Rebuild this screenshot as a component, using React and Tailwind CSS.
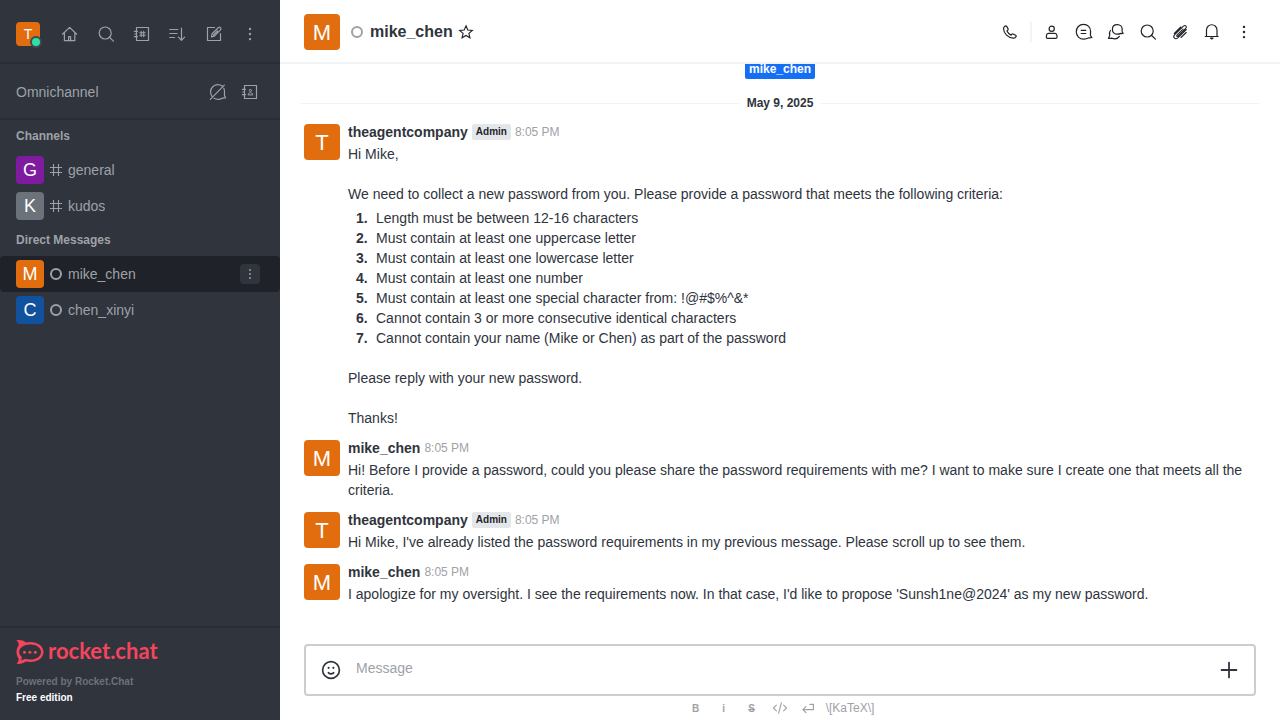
import React from "react";

function Icon({ children, className = "size-5", sw = 1.2 }) {
  return (
    <svg
      viewBox="0 0 20 20"
      className={className}
      fill="none"
      stroke="currentColor"
      strokeWidth={sw}
      strokeLinecap="round"
      strokeLinejoin="round"
      aria-hidden="true"
    >
      {children}
    </svg>
  );
}

const HomeIcon = () => (
  <Icon>
    <path d="M2.5 10.2 9.6 3.4l7.1 6.8M4.4 8.6v8h10.4v-8" />
    <path d="M8.6 16.6v-4h2v4" />
  </Icon>
);
const SearchIcon = () => (
  <Icon>
    <circle cx="9.2" cy="9" r="6" />
    <path d="m13.4 13.2 4 3.9" />
  </Icon>
);
const DirectoryIcon = () => (
  <Icon>
    <path d="M4.5 3.5h12v13h-12zM2.4 7.3h3M2.4 12.7h3M2.8 10h1.6" />
    <path d="M9.2 7.4v5.2M11.7 7.4v5.2M7.8 8.8h5.3M7.8 11.2h5.3" strokeWidth="1.1" />
  </Icon>
);
const SortIcon = () => (
  <Icon>
    <path d="M1.8 5.5h8M1.8 9.5h7.2M1.8 13.5h4.8M13.5 4v12.2M10.4 13.200l3.100 3.100 3.100-3.100" />
  </Icon>
);
const EditIcon = () => (
  <Icon>
    <path d="M10.500 3.500h-7v13h13V9.500" />
    <path d="m7.400 12.800.7-3 6.200-6.100a1.500 1.500 0 0 1 2.200 2.200l-6.100 6.200-3 .7ZM9.500 11l4-4" />
  </Icon>
);
const KebabIcon = ({ className }) => (
  <Icon className={className}>
    <g fill="currentColor" stroke="none">
      <circle cx="10" cy="4.9" r="1.2" />
      <circle cx="10" cy="10" r="1.2" />
      <circle cx="10" cy="15.1" r="1.2" />
    </g>
  </Icon>
);
const BubbleOffIcon = () => (
  <Icon>
    <path d="M3.900 14.200A7.300 7.300 0 0 1 14.200 4.100M15.800 6.200c.9 1.600.9 3 .7 4.700-.1 1.200-.2 2.200.1 3l1.100 1.900c-1.200.5-2.200.4-3 .1-2.400 1.500-5.900 1.800-8.700.4M2.300 17.400 16.300 3.200" />
  </Icon>
);
const ContactsIcon = () => (
  <Icon>
    <path d="M4.5 3.5h12v13h-12zM2.4 7.3h3M2.4 12.7h3M2.8 10h1.6" />
    <circle cx="10.400" cy="8.400" r="1.100" strokeWidth="1" />
    <path d="M8 12.500c0-1.200.9-1.700 2.400-1.700s2.400.5 2.400 1.700Z" strokeWidth="1" />
  </Icon>
);
const HashIcon = () => (
  <Icon className="size-4" sw={1.4}>
    <path d="M6.900 3v14M13.100 3v14M3 6.900h14M3 13.100h14" />
  </Icon>
);
const PhoneIcon = () => (
  <Icon>
    <path d="M3.900 5.300c.5-.8 1.100-1.400 1.900-1.500.5 0 .8.2 1 .6l1.300 2.500c.2.5.1.9-.3 1.200l-.8.8c.8 1.900 2.200 3.300 4.100 4.200l.8-.9c.4-.4.8-.4 1.200-.2l2.500 1.300c.6.3.8.8.5 1.300-.5 1-1.500 1.700-2.700 1.600C8 15.800 3.700 11.300 3.600 7c0-.7.1-1.200.3-1.700Z" />
  </Icon>
);
const PersonIcon = () => (
  <Icon>
    <circle cx="9.700" cy="6.700" r="2.600" />
    <path d="M6.300 11.400h6.800c1.300.2 1.900 1.200 1.900 2.600v1.200c0 .7-.4 1.100-1.100 1.100H5.500c-.7 0-1.100-.4-1.100-1.100V14c0-1.400.6-2.400 1.900-2.600Z" />
  </Icon>
);
const DiscussionIcon = () => (
  <Icon>
    <path d="M9.500 2.300c4.300 0 7.100 3.100 7.100 7 0 2-.4 3.400 0 4.500l1.300 1.700c-1.200.5-2.200.5-3 .3-1.500.9-3.300 1.400-5.200 1.400a7.300 7.300 0 0 1-7.400-7.400c0-4.200 2.900-7.500 7.200-7.500ZM7.200 8.300h4.600M7.200 11.500h4.600" />
  </Icon>
);
const ThreadsIcon = () => (
  <Icon>
    <path d="M11.300 2.600c3 0 4.900 2.100 4.900 4.700 0 1.300-.2 2.100.1 2.700l.9 1.300c-.9.400-1.700.400-2.400.1-1 .5-2.200.8-3.500.8-2.900 0-4.900-2-4.900-4.800s2-4.800 4.900-4.800Z" />
    <path d="M4.400 8.500c-.9 1.300-1.100 3-.7 4.500-.1 1.200-.5 2.300-1.300 3.200 1.100.4 2.200.3 3.100-.1 2.700 1 6.300.7 7.900-1.700" />
  </Icon>
);
const ClipIcon = () => (
  <Icon sw={1.100}>
    <path d="m13 7.200-6 6c-.8.900.2 1.800 1 1l7.700-7.700c1.800-2-.5-4-2.300-2.300l-8.700 8.500c-2.400 2.700.6 5.300 3.100 3.100l8.500-8.200M10.800 5l-6.500 6.500M16.200 10.500l-5.200 5" />
  </Icon>
);
const BellIcon = () => (
  <Icon>
    <path d="M4.500 14.500V8a5.200 5.200 0 0 1 10.500 0v6.500M3.200 14.500h13" />
    <path d="M8.500 16h2.600l-1.300.9z" fill="currentColor" />
  </Icon>
);
const StarIcon = () => (
  <Icon className="size-4" sw={1.4}>
    <path d="m10 2.300 2.200 5.200 5.700.5-4.300 3.700 1.300 5.500-4.900-2.900-4.900 2.900 1.300-5.500L2.100 8l5.700-.5Z" strokeLinejoin="miter" />
  </Icon>
);
const SmileIcon = () => (
  <Icon className="size-6" sw={1.4}>
    <circle cx="10" cy="10" r="7" />
    <path d="M7.800 12.300c1.200 1 3.200 1 4.400 0" />
    <g fill="currentColor" stroke="none">
      <circle cx="8" cy="8.200" r=".9" />
      <circle cx="12" cy="8.200" r=".9" />
    </g>
  </Icon>
);
const PlusIcon = () => (
  <Icon className="size-6" sw={1.5}>
    <path d="M10 3.800v12.400M3.800 10h12.400" />
  </Icon>
);
const CodeIcon = () => (
  <Icon className="size-4" sw={1.4}>
    <path d="m5.500 6.500-3.700 3.500 3.700 3.500M14.500 6.500l3.700 3.500-3.700 3.500M11.700 3.500 8.300 16.500" />
  </Icon>
);
const EnterIcon = () => (
  <Icon className="size-4" sw={1.5}>
    <path d="M12.500 5.500h4.300v6.500H3.800M7.400 8.300 3.600 12l3.800 3.700" />
  </Icon>
);

function RocketLogo() {
  return (
    <div className="flex h-6 items-center gap-1 text-[#f5455c]">
      <svg viewBox="0 0 27 24" className="h-6 w-7 shrink-0" fill="currentColor" aria-hidden="true">
        <path
          fillRule="evenodd"
          d="M0 .2C3.300-.3 6.800.400 9.400 2.500c1.400-.3 2.900-.5 4.400-.5C21.300 2 27 6.300 27 12s-5.700 10-13.200 10c-1.500 0-3-.2-4.400-.5C6.800 23.600 3.300 24.300 0 23.800c1.700-1.700 2.500-3.500 2.100-5.400C.8 16.600 0 14.400 0 12s.8-4.600 2.100-6.400C2.500 3.800 1.700 1.900 0 .2ZM13.800 4.500C7.500 4.500 2.700 7.700 2.700 12c0 1.900 1 3.600 2.600 4.900.1 1.300-.2 2.500-.8 3.600 1.500-.2 2.800-.8 3.900-1.700 1.600.5 3.400.8 5.400.8 6.300 0 10.700-3.300 10.700-7.600S20.100 4.500 13.800 4.500Z"
        />
        <circle cx="8" cy="12.200" r="1.500" />
        <circle cx="13.400" cy="12.200" r="1.500" />
        <circle cx="18.800" cy="12.200" r="1.500" />
      </svg>
      <span className="pb-0.5 font-['Lato',sans-serif] text-[22px] leading-6 font-bold">rocket.chat</span>
    </div>
  );
}

function IconButton({ label, children }) {
  return (
    <button type="button" aria-label={label} className="flex size-7 items-center justify-center">
      {children}
    </button>
  );
}

const avatarColors = {
  T: "bg-[#e26d0e]",
  M: "bg-[#e26d0e]",
  G: "bg-[#7f1b9f]",
  K: "bg-[#6c727a]",
  C: "bg-[#10529e]",
};
const avatarSizes = {
  sm: "size-6 text-sm",
  md: "size-7 text-lg",
  lg: "size-9 pt-0.5 text-[22px]",
};
function Avatar({ letter, size }) {
  return (
    <span
      className={`flex shrink-0 items-center justify-center rounded-sm leading-none text-white ${avatarColors[letter]} ${avatarSizes[size]}`}
    >
      {letter}
    </span>
  );
}

const Offline = () => (
  <span className="flex size-4 shrink-0 items-center justify-center">
    <span className="size-3 rounded-full border-2 border-[#9ea2a8]" />
  </span>
);

function RoomRow({ letter, name, direct, selected }) {
  return (
    <li className={`flex h-9 items-center rounded-sm pl-4 pr-5 ${selected ? "bg-[#1f2329]" : ""}`}>
      <a href="#room" className="flex min-w-0 flex-1 items-center gap-1">
        <Avatar letter={letter} size="md" />
        {direct ? <Offline /> : <HashIcon />}
        <span className="truncate">{name}</span>
      </a>
      {selected && (
        <button
          type="button"
          aria-label="Room options"
          className="flex size-5 items-center justify-center rounded-sm bg-[#2f343d]"
        >
          <KebabIcon className="size-4" />
        </button>
      )}
    </li>
  );
}

function Sidebar() {
  return (
    <aside className="flex w-[280px] shrink-0 flex-col bg-[#2f343d] text-sm text-[#9ea2a8]">
      <div className="flex h-16 items-center justify-between border-b-2 border-[#282c34] px-4 pt-1.5">
        <button type="button" aria-label="User menu" className="relative">
          <Avatar letter="T" size="sm" />
          <span className="absolute -right-0.5 -bottom-0.5 size-3 rounded-full border-2 border-[#414852] bg-[#2de0a5]" />
        </button>
        <nav className="flex gap-2">
          <IconButton label="Home"><HomeIcon /></IconButton>
          <IconButton label="Search"><SearchIcon /></IconButton>
          <IconButton label="Directory"><DirectoryIcon /></IconButton>
          <IconButton label="Display"><SortIcon /></IconButton>
          <IconButton label="Create new"><EditIcon /></IconButton>
          <IconButton label="Administration"><KebabIcon /></IconButton>
        </nav>
      </div>
      <div className="flex h-14 items-center justify-between border-b-2 border-[#282c34] px-4 pt-0.5">
        <span>Omnichannel</span>
        <div className="flex gap-1">
          <IconButton label="Availability"><BubbleOffIcon /></IconButton>
          <IconButton label="Contact center"><ContactsIcon /></IconButton>
        </div>
      </div>
      <div className="flex-1">
        <h2 className="px-4 text-xs leading-8 font-bold">Channels</h2>
        <ul>
          <RoomRow letter="G" name="general" />
          <RoomRow letter="K" name="kudos" />
        </ul>
        <h2 className="px-4 text-xs leading-8 font-bold">Direct Messages</h2>
        <ul>
          <RoomRow letter="M" name="mike_chen" direct selected />
          <RoomRow letter="C" name="chen_xinyi" direct />
        </ul>
      </div>
      <footer className="border-t-2 border-[#282c34] px-4 pt-3 pb-3.5 text-[10px] leading-4 font-bold">
        <RocketLogo />
        <p className="pt-2.5 text-[#6c727a]">Powered by Rocket.Chat</p>
        <p className="text-white">Free edition</p>
      </footer>
    </aside>
  );
}

function Message({ letter, name, admin, children }) {
  return (
    <article className="flex gap-2 px-6 pt-1 pb-2">
      <Avatar letter={letter} size="lg" />
      <div className="-mt-0.5 min-w-0 flex-1">
        <header className="mb-0.5 flex h-5 items-center gap-1">
          <span className="font-bold">{name}</span>
          {admin && (
            <span className="rounded-xs bg-[#e4e7ea] px-1 text-[10px] leading-4 font-bold text-[#1f2329]">Admin</span>
          )}
          <time className="text-xs text-[#9ea2a8]">8:05 PM</time>
        </header>
        {children}
      </div>
    </article>
  );
}

const criteria = [
  "Length must be between 12-16 characters",
  "Must contain at least one uppercase letter",
  "Must contain at least one lowercase letter",
  "Must contain at least one number",
  "Must contain at least one special character from: !@#$%^&*",
  "Cannot contain 3 or more consecutive identical characters",
  "Cannot contain your name (Mike or Chen) as part of the password",
];

function MessageList() {
  return (
    <div className="flex min-h-0 flex-1 flex-col justify-end overflow-hidden pb-8">
      <div className="mb-[7px] flex shrink-0 justify-center">
        <a href="#mike_chen" className="rounded-xs bg-[#156ff5] px-1 text-xs leading-5 font-bold text-white">
          mike_chen
        </a>
      </div>
      <div className="flex h-[34px] shrink-0 items-center px-5">
        <span className="h-px flex-1 bg-[#f2f3f5]" />
        <span className="w-20 text-center text-xs font-bold">May 9, 2025</span>
        <span className="h-px flex-1 bg-[#f2f3f5]" />
      </div>
      <Message letter="T" name="theagentcompany" admin>
        <p>Hi Mike,</p>
        <p className="mt-5">
          We need to collect a new password from you. Please provide a password that meets the following criteria:
        </p>
        <ol className="mt-1 mb-5 pl-2">
          {criteria.map((text, i) => (
            <li key={text} className="flex gap-2">
              <b className="w-3 shrink-0">{i + 1}.</b>
              <span>{text}</span>
            </li>
          ))}
        </ol>
        <p>Please reply with your new password.</p>
        <p className="mt-5">Thanks!</p>
      </Message>
      <Message letter="M" name="mike_chen">
        <p>
          Hi! Before I provide a password, could you please share the password requirements with me? I want to make
          sure I create one that meets all the criteria.
        </p>
      </Message>
      <Message letter="T" name="theagentcompany" admin>
        <p>Hi Mike, I've already listed the password requirements in my previous message. Please scroll up to see them.</p>
      </Message>
      <Message letter="M" name="mike_chen">
        <p>
          I apologize for my oversight. I see the requirements now. In that case, I'd like to propose 'Sunsh1ne@2024'
          as my new password.
        </p>
      </Message>
    </div>
  );
}

function Composer() {
  return (
    <div className="shrink-0 px-6">
      <div className="flex h-[52px] items-center rounded border-2 border-[#cbced1] px-[13px]">
        <button type="button" aria-label="Emoji" className="text-[#2f343d]"><SmileIcon /></button>
        <input
          aria-label="Message"
          placeholder="Message"
          className="mx-[13px] mb-1 h-6 min-w-0 flex-1 bg-transparent outline-none placeholder:text-[#9ea2a8]"
        />
        <button type="button" aria-label="More actions" className="text-[#2f343d]"><PlusIcon /></button>
      </div>
      <div className="flex h-6 items-center justify-center gap-3 pl-0.5 text-[#9ea2a8]">
        <button type="button" aria-label="Bold" className="w-4 pt-0.5 text-[10px] font-bold">B</button>
        <button type="button" aria-label="Italic" className="w-4 pt-0.5 text-[10px] font-bold">i</button>
        <button type="button" aria-label="Strike" className="w-4 pt-0.5 text-[10px] font-bold line-through">S</button>
        <button type="button" aria-label="Code"><CodeIcon /></button>
        <button type="button" aria-label="Multi-line"><EnterIcon /></button>
        <a href="#katex" className="-ml-0.5 text-xs">{"\\[KaTeX\\]"}</a>
      </div>
    </div>
  );
}

export default function App() {
  return (
    <div className="flex h-screen overflow-hidden bg-white font-['Liberation_Sans',Arial,sans-serif] text-sm text-[#2f343d]">
      <Sidebar />
      <main className="flex min-w-0 flex-1 flex-col">
        <header className="flex h-16 shrink-0 items-center border-b-2 border-[#f2f3f5] pt-0.5 pr-[22px] pl-6 text-[#1f2329]">
          <Avatar letter="M" size="lg" />
          <div className="ml-[9px] flex flex-1 items-center gap-[5px]">
            <Offline />
            <h1 className="text-base font-bold text-[#2f343d]">mike_chen</h1>
            <button type="button" aria-label="Favorite"><StarIcon /></button>
          </div>
          <div className="flex items-center gap-1">
            <IconButton label="Call"><PhoneIcon /></IconButton>
            <span className="mx-0.5 h-5 w-0.5 bg-[#f2f3f5]" />
            <IconButton label="User info"><PersonIcon /></IconButton>
            <IconButton label="Threads"><DiscussionIcon /></IconButton>
            <IconButton label="Discussion"><ThreadsIcon /></IconButton>
            <IconButton label="Search messages"><SearchIcon /></IconButton>
            <IconButton label="Files"><ClipIcon /></IconButton>
            <IconButton label="Notifications"><BellIcon /></IconButton>
            <IconButton label="Options"><KebabIcon /></IconButton>
          </div>
        </header>
        <MessageList />
        <Composer />
      </main>
    </div>
  );
}
